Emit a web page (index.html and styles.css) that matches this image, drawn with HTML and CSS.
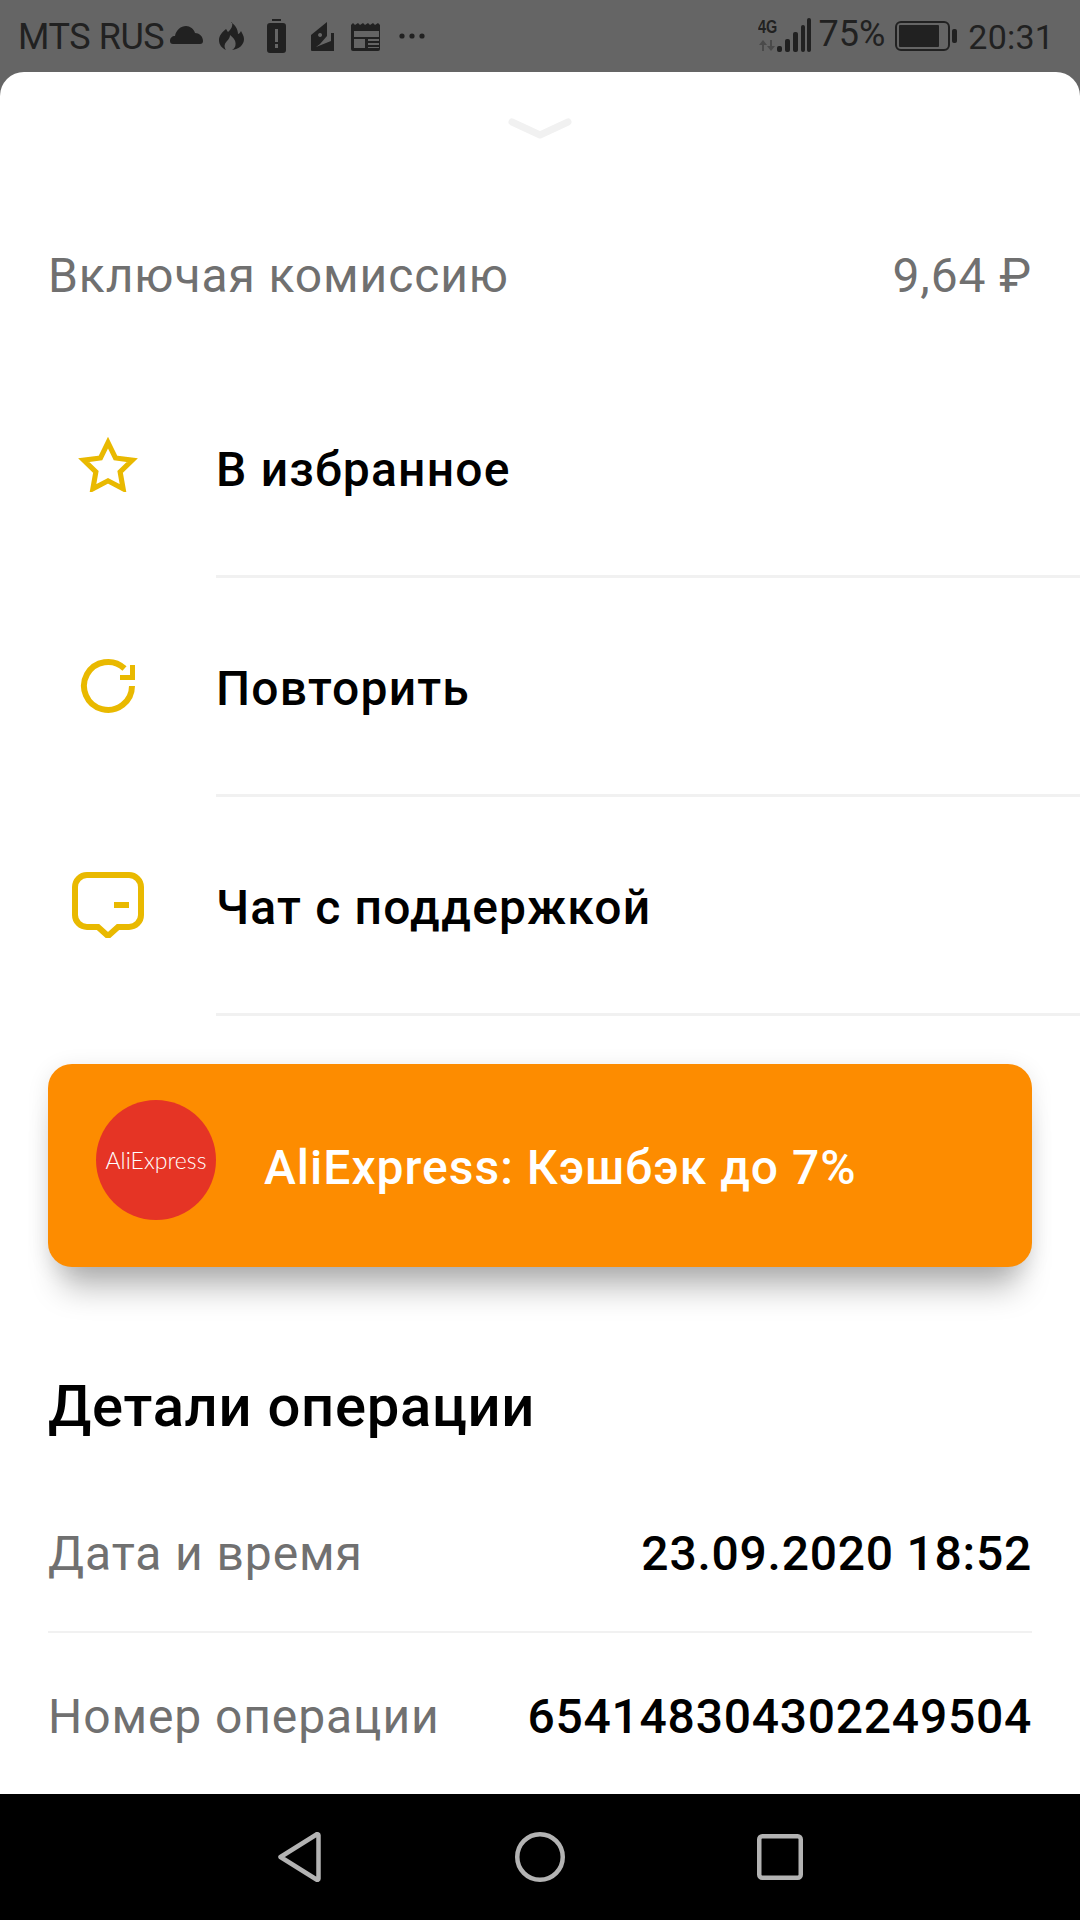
FILE: index.html
```html
<!DOCTYPE html>
<html lang="ru">
<head>
<meta charset="utf-8">
<title>Детали операции</title>
<link rel="stylesheet" href="styles.css">
</head>
<body>
<div class="screen">
  <header class="status">
    <span class="carrier">MTS RUS</span>
    <svg class="st st-cloud" width="33" height="18" viewBox="0 0 33 18"><path d="M3 18A3 3 0 0 1 0 15c0-3 2-5 5-5 1-6 6-10 11-10 4 0 8 3 9 7 4 0 8 3 8 8a3 3 0 0 1-3 3z"/></svg>
    <svg class="st st-fire" width="25" height="28" viewBox="0 0 25 28"><path d="M13 0c1 5-1 7-4 10-1-1-1-2-2-3C3 10 0 14 0 18c0 5 3 8 7 10-2-3-2-6 1-9 2-2 3-4 3-6 4 3 7 7 5 12-1 1-1 2-3 3 7-1 12-5 12-11 0-3-2-6-3-8-1 2-2 3-3 3 0-5-3-9-7-12z"/></svg>
    <svg class="st st-batt" width="19" height="34" viewBox="0 0 19 34"><path d="M5 0h9v2H5zM3 4h13a3 3 0 0 1 3 3v24a3 3 0 0 1-3 3H3a3 3 0 0 1-3-3V7a3 3 0 0 1 3-3zM8 10v13h3V10zM8 25v4h3v-4z" fill-rule="evenodd"/></svg>
    <svg class="st st-wallet" width="23" height="29" viewBox="0 0 23 29"><path d="M16 0v14l-7 8-4 3 15-6V11h3v18H1a1 1 0 0 1-1-1V13zM9 11a2 2 0 1 0 .1 0z" fill-rule="evenodd"/></svg>
    <svg class="st st-cal" width="31" height="28" viewBox="0 0 31 28"><path d="M0 2l2-2 2 2 3-2 2 2 3-2 2 2 3-2 2 2 3-2 2 2 3-2 2 2v24a2 2 0 0 1-2 2H2a2 2 0 0 1-2-2zM3 8v6h25V8zM3 16v9h11v-9zM17 16v2h11v-2zM17 20v2h11v-2zM17 24v1h11v-1z" fill-rule="evenodd"/></svg>
    <svg class="st st-dots" width="26" height="6" viewBox="0 0 26 6"><circle cx="3" cy="3" r="2.6"/><circle cx="13" cy="3" r="2.6"/><circle cx="23" cy="3" r="2.6"/></svg>
    <span class="spacer"></span>
    <span class="net"><span class="net-g">4G</span><svg class="net-a" width="18" height="11" viewBox="0 0 18 11"><path d="M5 0l4 5H6v6H4V5H1zM13 11l4-5h-3V0h-2v6H9z" fill="#4a4a4a"/></svg></span>
    <svg class="signal" width="34" height="34" viewBox="0 0 34 34"><rect x="0" y="28" width="5" height="6" rx="2"/><rect x="8" y="21" width="5" height="13" rx="2"/><rect x="16" y="14" width="5" height="20" rx="2"/><rect x="24" y="7" width="4" height="27" rx="2"/><rect x="30" y="0" width="4" height="34" rx="2"/></svg>
    <span class="pct">75%</span>
    <svg class="bat" width="62" height="30" viewBox="0 0 62 30"><rect x="1" y="1" width="53" height="28" rx="5" fill="none" stroke="#212121" stroke-width="2"/><rect x="4" y="4" width="40" height="22" rx="1"/><rect x="57" y="8" width="5" height="14" rx="2"/></svg>
    <span class="time">20:31</span>
  </header>

  <main class="sheet">
    <svg class="grabber" width="64" height="22" viewBox="0 0 64 22"><path d="M4 4l28 13 28-13" fill="none" stroke="#f1f1f1" stroke-width="7" stroke-linecap="round" stroke-linejoin="round"/></svg>

    <div class="fee">
      <span>Включая комиссию</span>
      <span>9,64 ₽</span>
    </div>

    <ul class="actions">
      <li class="action">
        <span class="action-icon action-icon-star"><svg width="60" height="56" viewBox="0 0 64 60"><path d="M32 7l8 16.500 18 2.300-13 12.600 3.200 18.100L32 48l-16.200 8.500 3.200-18.100L6 25.800l18-2.300z" fill="none" stroke="#e9b900" stroke-width="5.500" stroke-miterlimit="6"/></svg></span>
        <span class="action-label">В избранное</span>
      </li>
      <li class="action">
        <span class="action-icon action-icon-repeat"><svg width="60" height="60" viewBox="0 0 60 60"><path d="M54 30A24 24 0 1 1 46.500 12.500" fill="none" stroke="#e9b900" stroke-width="6"/><path d="M52 9h5v15H42v-5h10z" fill="#e9b900"/></svg></span>
        <span class="action-label">Повторить</span>
      </li>
      <li class="action">
        <span class="action-icon action-icon-chat"><svg width="72" height="66" viewBox="0 0 72 66"><path d="M15 3h42a12 12 0 0 1 12 12v28a12 12 0 0 1-12 12H46L36 64 26 55H15A12 12 0 0 1 3 43V15A12 12 0 0 1 15 3z" fill="none" stroke="#e9b900" stroke-width="6"/><path d="M42 30h15v6H42z" fill="#e9b900"/></svg></span>
        <span class="action-label">Чат с поддержкой</span>
      </li>
    </ul>

    <a class="promo">
      <span class="promo-logo">AliExpress</span>
      <span class="promo-text">AliExpress: Кэшбэк до 7%</span>
    </a>

    <h2 class="title">Детали операции</h2>

    <dl class="details">
      <div class="detail detail-date">
        <dt>Дата и время</dt>
        <dd>23.09.2020 18:52</dd>
      </div>
      <div class="detail">
        <dt>Номер операции</dt>
        <dd>654148304302249504</dd>
      </div>
    </dl>
  </main>

  <nav class="navbar">
    <svg class="nav-back" width="43" height="50" viewBox="0 0 43 50"><path d="M38.500 2.500 2.500 25l36 22.500a1.200 1.200 0 0 0 2-1V3.500a1.200 1.200 0 0 0-2-1z" fill="none" stroke="#b3b3b3" stroke-width="4.500" stroke-linejoin="round"/></svg>
    <svg class="nav-home" width="50" height="50" viewBox="0 0 50 50"><circle cx="25" cy="25" r="22.750" fill="none" stroke="#b3b3b3" stroke-width="4.500"/></svg>
    <svg class="nav-recent" width="46" height="46" viewBox="0 0 46 46"><rect x="2.250" y="2.250" width="41.500" height="41.500" rx="3" fill="none" stroke="#b3b3b3" stroke-width="4.500"/></svg>
  </nav>
</div>
</body>
</html>
```
FILE: styles.css
```css
* { box-sizing: border-box; }
html, body { margin: 0; padding: 0; }
body { font-family: Roboto, "Noto Sans", sans-serif; background: #000; }

.screen {
  width: 1080px;
  height: 1920px;
  display: flex;
  flex-direction: column;
  overflow: hidden;
  background: #656565;
}

/* Status bar */
.status {
  height: 72px;
  flex: none;
  display: flex;
  align-items: flex-start;
  padding: 0 26px 0 18px;
  color: #212121;
}
.status svg { fill: #212121; flex: none; }
.carrier {
  font-size: 36px;
  line-height: 36px;
  margin-top: 19px;
  letter-spacing: -.43px;
  white-space: nowrap;
}
.st-cloud { margin: 26px 0 0 6px; }
.st-fire { margin: 22px 0 0 16px; }
.st-batt { margin: 19px 0 0 23px; }
.st-wallet { margin: 22px 0 0 25px; }
.st-cal { margin: 23px 0 0 17px; }
.st-dots { margin: 33px 0 0 17px; }
.spacer { flex: 1; }
.net {
  width: 18px;
  display: flex;
  flex-direction: column;
  margin-top: 19px;
}
.net-g {
  font-family: "Liberation Sans", sans-serif;
  font-weight: 700;
  font-size: 19px;
  line-height: 16px;
  transform: scaleX(.76);
  transform-origin: left;
  white-space: nowrap;
}
.net-a { margin-top: 5px; }
.signal { margin: 18px 0 0 1px; }
.pct {
  font-size: 36px;
  line-height: 36px;
  margin: 16px 0 0 7px;
}
.bat { margin: 21px 0 0 10px; }
.time {
  font-size: 34px;
  line-height: 36px;
  margin: 19px 0 0 11px;
  letter-spacing: .2px;
}

/* Sheet */
.sheet {
  flex: 1;
  min-height: 0;
  background: #fff;
  border-radius: 24px 24px 0 0;
  overflow: hidden;
  display: flex;
  flex-direction: column;
}
.grabber { display: block; align-self: center; margin-top: 46px; flex: none; }

.fee {
  display: flex;
  justify-content: space-between;
  margin: 109px 48px 0;
  font-size: 48px;
  line-height: 54px;
  letter-spacing: .9px;
  color: #707070;
}

.actions { list-style: none; margin: 56px 0 0; padding: 0; }
.action {
  height: 219px;
  display: flex;
  align-items: center;
  position: relative;
  padding-top: 2px;
}
.action::after {
  content: "";
  position: absolute;
  left: 216px;
  right: 0;
  bottom: 0;
  height: 3px;
  background: #f1f1f1;
}
.action-icon {
  width: 216px;
  display: flex;
  justify-content: center;
  flex: none;
}
.action-icon-star { margin-top: -11px; }
.action-icon-repeat { margin-top: -5px; }
.action-icon-chat { margin-top: -6px; }
.action-label {
  font-size: 48px;
  font-weight: 500;
  letter-spacing: 1.2px;
  color: #000;
}

.promo {
  margin: 48px 48px 0;
  height: 203px;
  flex: none;
  display: flex;
  align-items: center;
  padding-left: 48px;
  background: #fd8c00;
  border-radius: 24px;
  box-shadow: 0 34px 32px -14px rgba(0, 0, 0, .28), 0 4px 22px rgba(0, 0, 0, .1);
}
.promo-logo {
  width: 120px;
  height: 120px;
  flex: none;
  border-radius: 50%;
  background: #e53425;
  color: #fff;
  display: flex;
  align-items: center;
  justify-content: center;
  font-family: Lato, sans-serif;
  font-weight: 300;
  font-size: 23px;
  margin-top: -11px;
}
.promo-text {
  margin-left: 48px;
  padding-top: 4px;
  font-size: 48px;
  font-weight: 500;
  letter-spacing: 1px;
  color: #fff;
}

.title {
  margin: 106px 48px 0;
  font-size: 58px;
  line-height: 66px;
  font-weight: 500;
  letter-spacing: .7px;
  color: #000;
}

.details { margin: 0 48px; }
.detail {
  display: flex;
  justify-content: space-between;
  align-items: center;
  height: 166px;
  white-space: nowrap;
}
.detail-date {
  height: 157px;
  margin-top: 37px;
  padding-bottom: 1px;
  border-bottom: 2px solid #f1f1f1;
}
.detail dt { font-size: 48px; letter-spacing: .9px; color: #707070; }
.detail dd { margin: 0; font-size: 48px; font-weight: 500; letter-spacing: .75px; color: #000; }

/* Navigation bar */
.navbar {
  height: 126px;
  flex: none;
  background: #000;
  display: flex;
  align-items: center;
  padding-left: 278px;
}
.nav-home { margin-left: 194px; }
.nav-recent { margin-left: 192px; }
```
